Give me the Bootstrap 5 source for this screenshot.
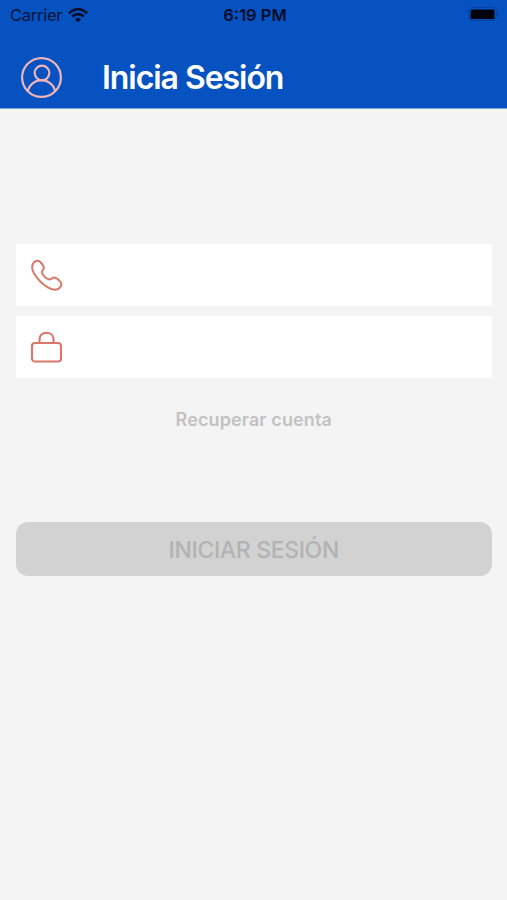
<!DOCTYPE html>
<html lang="es">
<head>
<meta charset="utf-8">
<meta name="viewport" content="width=device-width, initial-scale=1">
<title>Inicia Sesión</title>
<link href="https://cdn.jsdelivr.net/npm/bootstrap@5.3.0/dist/css/bootstrap.min.css" rel="stylesheet">
<style>
  body { font-family: Inter, "Liberation Sans", sans-serif; background: #f4f4f4; }
  .app-header { background: #0552c0; height: 109px; border-bottom: 1px solid #7ea5dc; }
  .status-bar { height: 30px; padding: 0 7px 0 10px; color: #03143a; font-size: 16.5px; line-height: 30px; }
  .status-side { flex: 1 1 0; }
  .carrier { letter-spacing: -.25px; }
  .wifi { margin-left: 6px; }
  .status-time { color: #020d28; font-size: 16.5px; }
  .title-row { height: 78px; padding: 17px 21px 0; gap: 40px; }
  .page-title { font-size: 32px; line-height: 40px; letter-spacing: -1.05px; }
  .login-form { padding: 135px 15.5px 0 16px; }
  .field-row { height: 62px; padding-left: 14px; }
  .field-row + .field-row { margin-top: 10px; }
  .field-row .form-control:focus { box-shadow: none; }
  .recover { color: #c2c2c2; font-size: 18px; line-height: 24px; letter-spacing: .12px; margin-top: 30px; }
  .submit-btn { height: 54px; margin-top: 90px; padding: 8px 0 5px; border-radius: 12px; font-size: 23px; line-height: 1; letter-spacing: -.35px; }
  .submit-btn:disabled { background: #d2d2d2; color: #b3b3b3; opacity: 1; }
</style>
</head>
<body>
<header class="app-header">
  <div class="status-bar d-flex">
    <div class="status-side d-flex align-items-center">
      <span class="carrier">Carrier</span>
      <svg class="wifi flex-shrink-0" width="20" height="15" viewBox="0 0 20 15" fill="none" stroke="#020d28" stroke-width="2.7">
        <path d="M1 5.2C6-.1 14-.1 19 5.2M4.2 8.6C7.5 5.3 12.5 5.3 15.8 8.6"/>
        <path d="M10 14.2L7 11.3Q10 8.9 13 11.3Z" fill="#020d28" stroke="none"/>
      </svg>
    </div>
    <span class="status-time fw-semibold">6:19 PM</span>
    <div class="status-side d-flex align-items-center justify-content-end">
      <svg width="32" height="16" viewBox="0 0 32 16">
        <rect x=".5" y=".5" width="28" height="13" rx="4" fill="none" stroke="#0441a0"/>
        <rect x="2.5" y="2.5" width="24" height="9.5" rx="1.5" fill="#00040c"/>
        <path d="M30 5q2 2 0 4z" fill="#0441a0"/>
      </svg>
    </div>
  </div>
  <div class="title-row d-flex align-items-center">
    <svg class="flex-shrink-0" width="41" height="41" viewBox="0 0 41 41" fill="none" stroke="#efb5b9" stroke-width="2.2">
      <circle cx="20.5" cy="20.5" r="19.4"/>
      <circle cx="21" cy="16" r="7.3"/>
      <path d="M6.8 33.7C8.5 27.5 14 23.2 20.5 23.2S32.5 27.5 34.2 33.7"/>
    </svg>
    <h1 class="page-title text-white fw-semibold mb-0">Inicia Sesión</h1>
  </div>
</header>
<main>
  <form class="login-form">
    <div class="field-row d-flex align-items-center bg-white">
      <svg class="flex-shrink-0" width="33" height="33" viewBox="0 0 33 33" fill="none" stroke="#d9776a" stroke-width="2" stroke-linejoin="round">
        <path d="M3.8 3.5C6 1.3 8.6 1.3 10.3 3C12.2 5 13.7 7 13.9 8.9C14 10.6 11.9 11.2 11.9 13C12.1 15.8 16.2 20 19.3 20.6C21.4 20.8 22 18.6 23.9 18.6C25.7 18.6 28 20.3 30 22.4C32 24.4 31.8 26.5 29.8 28.8C26.8 31.8 22.9 31.3 18.2 28.6C12.2 25 7.2 19.8 4 14.2C1.2 9 1.5 6 3.8 3.5Z"/>
      </svg>
      <input type="tel" class="form-control border-0 rounded-0 bg-transparent" aria-label="Teléfono">
    </div>
    <div class="field-row d-flex align-items-center bg-white">
      <svg class="flex-shrink-0" width="33" height="33" viewBox="0 0 33 33" fill="none" stroke="#d9776a" stroke-width="2.1">
        <rect x="2" y="12" width="29" height="18.5" rx="3"/>
        <path d="M9.5 12V8.3C9.5 4.4 12.4 1.8 16.5 1.8S23.5 4.4 23.5 8.3V12"/>
      </svg>
      <input type="password" class="form-control border-0 rounded-0 bg-transparent" aria-label="Contraseña">
    </div>
    <div class="recover text-center fw-semibold">Recuperar cuenta</div>
    <button type="button" class="submit-btn btn border-0 w-100 fw-medium" disabled>INICIAR SESIÓN</button>
  </form>
</main>
<script src="https://cdn.jsdelivr.net/npm/bootstrap@5.3.0/dist/js/bootstrap.bundle.min.js"></script>
</body>
</html>
